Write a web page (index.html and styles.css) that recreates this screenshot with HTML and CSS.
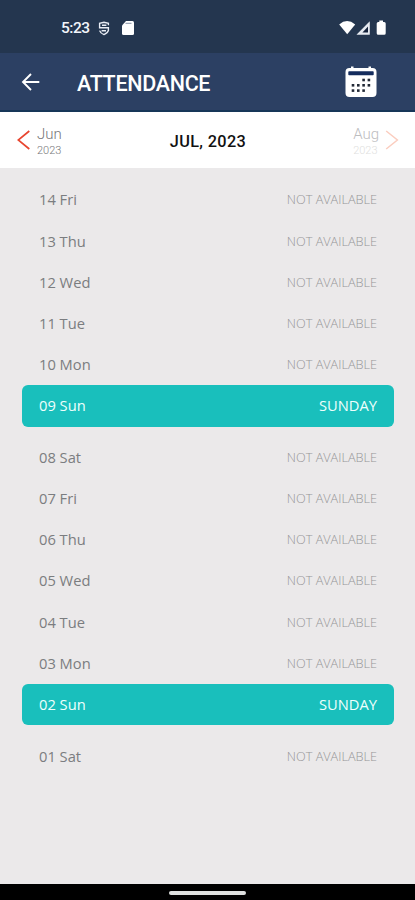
FILE: index.html
```html
<!DOCTYPE html>
<html lang="en">
<head>
  <meta charset="utf-8">
  <meta name="viewport" content="width=device-width, initial-scale=1">
  <title>Attendance</title>
  <link rel="stylesheet" href="styles.css">
</head>
<body>
  <div class="status-bar">
    <span class="clock">5:23</span>
    <svg class="icon-shield" width="12" height="15" viewBox="0 0 12 15" fill="none" stroke="#e9edf5" stroke-width="1.4">
      <path d="M10.4 4.2V2.4L6 1.2L1.6 2.4V6.8H10.4V9.4Q9.6 12.2 6 13.6Q2.4 12.2 1.6 9.6M4 4.2H8.4M3.6 9.8H8"/>
    </svg>
    <svg class="icon-card" width="12" height="14" viewBox="0 0 12 14">
      <path d="M4 0H10.5Q12 0 12 1.5V12.5Q12 14 10.5 14H1.5Q0 14 0 12.5V4.5Z" fill="#fff"/>
      <path d="M3.5 2.3H9.5" stroke="#8490a4" stroke-width="1"/>
    </svg>
    <svg class="icon-signal" width="48" height="16" viewBox="0 0 48 16">
      <path d="M0.2 4.4Q8 -2.4 16.2 4.4L8.2 14.3Z" fill="#fff"/>
      <path d="M18.8 14.1L30.2 2.5V14.1Z" fill="#e6eaf1" stroke="#e6eaf1" stroke-width="1.1"/>
      <path d="M23.4 12.6L29 6.6V12.6Z" fill="#13203a"/>
      <path d="M40.3 0.5H44V2H45.2Q46.7 2 46.7 3.5V13.2Q46.7 14.7 45.2 14.7H39.2Q37.7 14.7 37.7 13.2V3.5Q37.7 2 39.2 2H40.3Z" fill="#fff"/>
    </svg>
  </div>

  <header class="app-bar">
    <svg class="back" width="20" height="18" viewBox="0 0 20 18" fill="none" stroke="#fff" stroke-width="1.9">
      <path d="M18.3 9H2M10 1L2 9L10 17"/>
    </svg>
    <h1>ATTENDANCE</h1>
    <svg class="calendar" width="32" height="32" viewBox="0 0 32 32">
      <path d="M6 0.5H8.5V2H23.5V0.5H26V2H27.5Q31.5 2 31.5 6V27Q31.5 31 27.5 31H4.5Q0.5 31 0.5 27V6Q0.5 2 4.5 2H6Z" fill="#fff"/>
      <rect x="3.3" y="5.3" width="25.4" height="4" rx="0.8" fill="#142c5d"/>
      <g fill="#222936">
        <rect x="17.3" y="12.7" width="2.6" height="2.6"/>
        <rect x="22.6" y="12.7" width="2.6" height="2.6"/>
        <rect x="6.7" y="18" width="2.6" height="2.6"/>
        <rect x="12" y="18" width="2.6" height="2.6"/>
        <rect x="17.3" y="18" width="2.6" height="2.6"/>
        <rect x="22.6" y="18" width="2.6" height="2.6"/>
        <rect x="6.7" y="23.3" width="2.6" height="2.6"/>
        <rect x="12" y="23.3" width="2.6" height="2.6"/>
        <rect x="17.3" y="23.3" width="2.6" height="2.6"/>
      </g>
    </svg>
  </header>

  <nav class="month-bar">
    <div class="month prev">
      <svg width="14" height="20" viewBox="0 0 14 20" fill="none" stroke="#e8452f" stroke-width="1.7">
        <path d="M12.3 1L1.2 10L12.3 19"/>
      </svg>
      <div class="label">Jun<small>2023</small></div>
    </div>
    <div class="current">JUL, 2023</div>
    <div class="month next">
      <div class="label">Aug<small>2023</small></div>
      <svg width="14" height="20" viewBox="0 0 14 20" fill="none" stroke="#fbcdbf" stroke-width="1.5">
        <path d="M1.2 1L12.4 10L1.2 19"/>
      </svg>
    </div>
  </nav>

  <main class="days">
    <div class="day"><span>14 Fri</span><span class="state">NOT AVAILABLE</span></div>
    <div class="day"><span>13 Thu</span><span class="state">NOT AVAILABLE</span></div>
    <div class="day"><span>12 Wed</span><span class="state">NOT AVAILABLE</span></div>
    <div class="day"><span>11 Tue</span><span class="state">NOT AVAILABLE</span></div>
    <div class="day"><span>10 Mon</span><span class="state">NOT AVAILABLE</span></div>
    <div class="day sunday"><span>09 Sun</span><span class="state">SUNDAY</span></div>
    <div class="day"><span>08 Sat</span><span class="state">NOT AVAILABLE</span></div>
    <div class="day"><span>07 Fri</span><span class="state">NOT AVAILABLE</span></div>
    <div class="day"><span>06 Thu</span><span class="state">NOT AVAILABLE</span></div>
    <div class="day"><span>05 Wed</span><span class="state">NOT AVAILABLE</span></div>
    <div class="day"><span>04 Tue</span><span class="state">NOT AVAILABLE</span></div>
    <div class="day"><span>03 Mon</span><span class="state">NOT AVAILABLE</span></div>
    <div class="day sunday"><span>02 Sun</span><span class="state">SUNDAY</span></div>
    <div class="day"><span>01 Sat</span><span class="state">NOT AVAILABLE</span></div>
  </main>

  <footer class="gesture-bar"><div class="handle"></div></footer>
</body>
</html>
```

FILE: styles.css
```css
* {
  box-sizing: border-box;
}

body {
  margin: 0;
  height: 900px;
  display: flex;
  flex-direction: column;
  overflow: hidden;
  background: #ebe9ea;
  font-family: "Open Sans", "Noto Sans", sans-serif;
}

.status-bar {
  height: 53px;
  padding: 3px 28px 0 61px;
  display: flex;
  align-items: center;
  background: #24364f;
}

.clock {
  width: 37px;
  color: #f2f5fa;
  font: 500 15.5px Roboto, sans-serif;
  letter-spacing: -0.5px;
}

.icon-card {
  margin-left: 12px;
}

.icon-signal {
  margin-left: auto;
}

.app-bar {
  height: 59px;
  padding: 0 38px 0 21px;
  display: flex;
  align-items: center;
  background: #2c4063;
  border-bottom: 2px solid #173658;
}

.app-bar h1 {
  margin: 3px 0 0 36px;
  color: #fff;
  font: 500 21.5px Roboto, sans-serif;
  letter-spacing: -0.3px;
}

.calendar {
  margin-left: auto;
}

.month-bar {
  height: 56px;
  padding: 0 16px 0 17px;
  display: grid;
  grid-template-columns: 1fr auto 1fr;
  align-items: center;
  background: #fff;
}

.month {
  display: flex;
  align-items: center;
  gap: 6px;
  color: #77777a;
  font: 300 15px/17px Roboto, sans-serif;
}

.month small {
  display: block;
  font-size: 11px;
  line-height: 16px;
}

.label {
  padding-top: 4px;
}

.next {
  justify-content: flex-end;
  color: #bdbdbf;
}

.next small {
  color: #dfdfe0;
}

.current {
  padding-top: 2px;
  color: #111;
  font: 500 16.3px Roboto, sans-serif;
  letter-spacing: 0.35px;
}

.days {
  flex: 1;
  padding: 11.4px 21px 0 22px;
}

.day {
  height: 41.2px;
  padding: 0 17px 1px;
  display: flex;
  align-items: center;
  justify-content: space-between;
  color: #7b7d80;
  font-size: 14.7px;
}

.state {
  color: #969698;
  font-size: 12.7px;
  font-weight: 300;
}

.sunday {
  margin-bottom: 10.3px;
  border-radius: 6px;
  background: #19bfbc;
  color: #effffd;
}

.sunday .state {
  color: #effffd;
  font-size: 14.7px;
  font-weight: 400;
}

.gesture-bar {
  height: 16px;
  padding-top: 7px;
  background: #000;
}

.handle {
  width: 77px;
  height: 4px;
  margin: 0 auto;
  border-radius: 2px;
  background: #dfe1e0;
}
```
